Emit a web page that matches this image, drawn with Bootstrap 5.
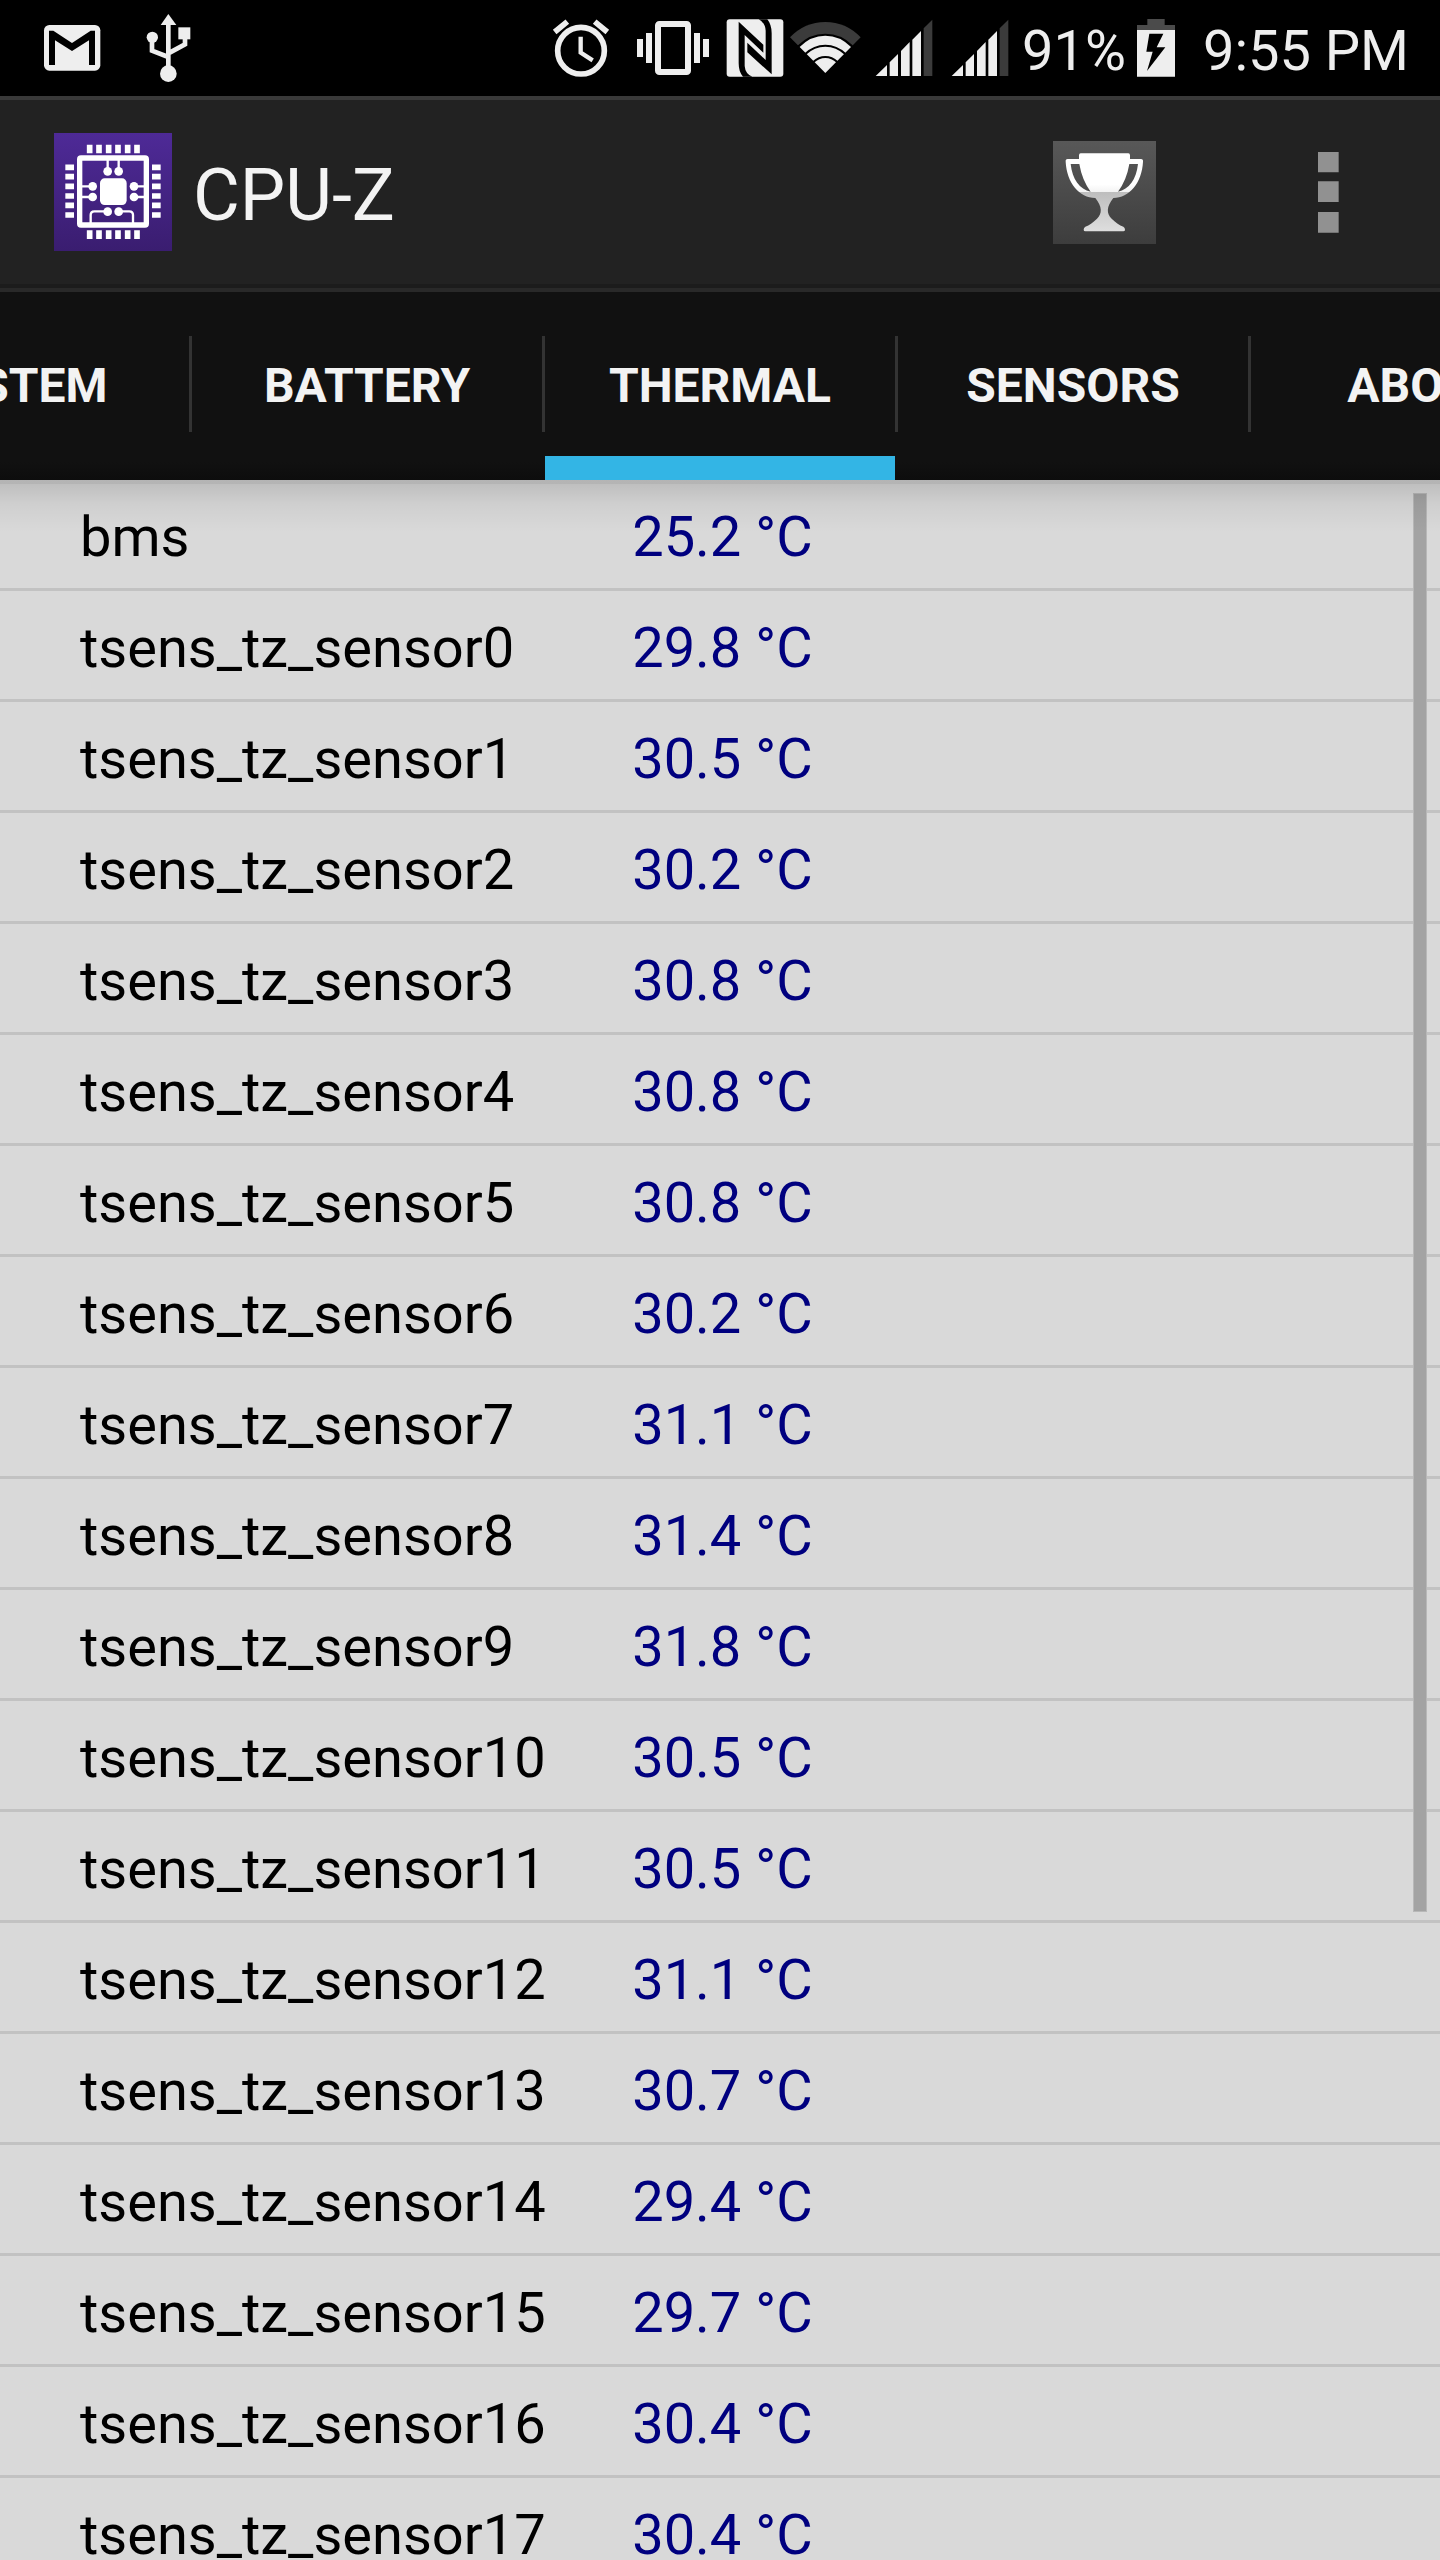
<!DOCTYPE html>
<html lang="en">
<head>
<meta charset="utf-8">
<meta name="viewport" content="width=device-width, initial-scale=1">
<title>CPU-Z</title>
<link href="https://cdn.jsdelivr.net/npm/bootstrap@5.3.0/dist/css/bootstrap.min.css" rel="stylesheet">
<style>
  body { font-family: Roboto, "Noto Sans", sans-serif; background: #d9d9d9; }
  svg { display: block; flex: none; }
  .status-bar { height: 96px; background: #000; color: #eee; font-size: 56px; line-height: 90px; padding-right: 31px; }
  .status-text { padding-top: 6px; }
  .action-bar { height: 196px; padding: 0 0 4px 54px; color: #f3f3f3; background: linear-gradient(#222 0 184px, #1c1c1c 184px); border-top: 4px solid #393939; border-bottom: 4px solid #292929; }
  .app-title { font-size: 72px; line-height: 84px; font-weight: 400; margin-left: 21px; padding-top: 8px; }
  .bar-btn { padding: 0; border: 0; border-radius: 0; background: none; }
  .trophy-btn { margin-right: 138px; }
  .menu-btn { padding: 0 101px 0 24px; }
  .tab-strip { height: 188px; background: linear-gradient(#111 170px, #0d0d0d); }
  .tab-item { flex: none; }
  .tab-link { width: 350px; color: #f3f3f3; font-size: 48px; font-weight: 700; }
  .tab-link.active { box-shadow: inset 0 -24px #33b5e5; }
  .tab-item + .tab-item::before { content: ""; width: 3px; height: 96px; margin-top: 44px; background: #333; }
  .list-area { min-height: 0; }
  .list-shade { height: 52px; background: linear-gradient(#0000002b 0 4px, #0000001f 4px, #0000000c 24px, #0000); pointer-events: none; }
  .list-thumb { top: 13px; right: 13px; width: 14px; height: 68.2%; background: #a3a3a3; border: 1px solid #b8b8b8; }
  .sensor-table { font-size: 56px; line-height: 66px; color: #000; table-layout: fixed; }
  .sensor-table th, .sensor-table td { padding: 24px 0 18px; font-weight: 400; border-bottom: 3px solid #c2c2c2; }
  .sensor-table th { width: 43.9%; padding-left: 80px; }
  .sensor-table td { color: #00007f; }
</style>
</head>
<body>
<div class="d-flex flex-column vh-100 overflow-hidden">
  <div class="status-bar d-flex flex-shrink-0">
    <svg width="144" height="96" viewBox="0 0 432 288" role="img" aria-label="Gmail"><rect x="132" y="75" width="169" height="137" rx="16" fill="#eee"/><path d="M147 92H160L216 129 272 92H285V195H267V121L216 153 165 121V195H147Z" fill="#000"/></svg>
    <svg width="56" height="96" viewBox="432 0 168 288" role="img" aria-label="USB"><g fill="#eee"><path d="M505 42L529 75H482Z"/><circle cx="457" cy="112" r="17"/><rect x="535" y="82" width="36" height="36"/><circle cx="505" cy="221" r="25"/></g><path d="M505 70V200M456 120V152L505 171M555 115V133L505 160" fill="none" stroke="#eee" stroke-width="14"/></svg>
    <svg class="ms-auto" width="82" height="96" viewBox="84 0 246 288" role="img" aria-label="Alarm"><g fill="none" stroke="#eee"><circle cx="183" cy="152" r="70" stroke-width="17"/><path d="M182 110V158L218 181" stroke-width="13"/><path d="M104 96L142 65M224 65L262 96" stroke-width="17"/></g></svg>
    <svg width="88" height="96" viewBox="330 0 264 288" role="img" aria-label="Vibrate"><rect x="414" y="72" width="90" height="144" rx="4" fill="none" stroke="#eee" stroke-width="18"/><path d="M351 117h18v54h-18zM378 99h18v90h-18zM522 99h18v90h-18zM549 117h18v54h-18z" fill="#eee"/></svg>
    <svg width="70" height="96" viewBox="594 0 210 288" role="img" aria-label="NFC"><rect x="620" y="58" width="170" height="172" rx="9" fill="#eee"/><path d="M656 65L730 134V158L674 105V198Q676 222 697 230H669Q656 216 656 190ZM755 223L682 157V128L737 180V92Q736 68 716 58H742Q755 74 755 100Z" fill="#000"/></svg>
    <svg width="82" height="96" viewBox="804 0 246 288" role="img" aria-label="Wi-Fi"><path d="M916 219L810 112Q854 66 916 66T1022 112Z" fill="#3b3b3b"/><path d="M916 219L834 136Q868 101 916 101T998 136V219H834V136Z" fill="#000"/><path d="M916 219L839 141Q872 107 916 107T993 141Z" fill="#eee"/><g fill="none" stroke="#000" stroke-width="6"><path d="M856 162Q882 137 916 137T976 162"/><path d="M880 186Q896 171 916 171T952 186"/></g></svg>
    <svg width="76" height="96" viewBox="1050 0 228 288" role="img" aria-label="Signal, first SIM"><path d="M1067 228L1101 195V228ZM1109 228V187L1134 162V228ZM1143 228V153L1169 126V228ZM1177 228V119L1203 93V228Z" fill="#eee"/><path d="M1211 228V85L1237 59V228Z" fill="#3b3b3b"/></svg>
    <svg width="76" height="96" viewBox="1050 0 228 288" role="img" aria-label="Signal, second SIM"><path d="M1067 228L1101 195V228ZM1109 228V187L1134 162V228ZM1143 228V153L1169 126V228ZM1177 228V119L1203 93V228Z" fill="#eee"/><path d="M1211 228V85L1237 59V228Z" fill="#3b3b3b"/></svg>
    <span class="status-text">91%</span>
    <svg width="77" height="96" viewBox="498 0 231 288" role="img" aria-label="Charging"><path d="M531 90V75H562V57H614V75H645V90Z" fill="#4b4b4b"/><path d="M531 90H645V230H531Z" fill="#eee"/><path d="M568 101H610L590 142H616L561 213 578 155H559Z" fill="#000"/></svg>
    <span class="status-text">9:55 PM</span>
  </div>

  <header class="action-bar d-flex align-items-center flex-shrink-0">
    <svg width="118" height="118" viewBox="162 399 354 354" role="img" aria-label="CPU-Z logo">
      <defs><linearGradient id="violet" x2="0" y2="1"><stop stop-color="#4e2a97"/><stop offset="1" stop-color="#3a1d70"/></linearGradient></defs>
      <rect x="162" y="399" width="354" height="354" fill="url(#violet)"/>
      <g fill="none" stroke="#fff"><rect x="239" y="474" width="200" height="201" rx="4" stroke-width="16"/>
      <path d="M323 480V514M356 480V514M245 559H278M245 591H278M402 559H433M402 591H433M272 670V645Q272 634 283 634H323M356 634H388Q399 634 399 645V670" stroke-width="7"/>
      <path d="M269 434v26M297 434v26M326 434v26M354 434v26M383 434v26M411 434v26M269 691v26M297 691v26M326 691v26M354 691v26M383 691v26M411 691v26M196 502h26M196 530h26M196 559h26M196 588h26M196 616h26M196 645h26M456 502h26M456 530h26M456 559h26M456 588h26M456 616h26M456 645h26" stroke-width="17"/></g>
      <g fill="#fff"><rect x="300" y="535" width="80" height="80" rx="14"/><circle cx="323" cy="514" r="13"/><circle cx="356" cy="514" r="13"/><circle cx="278" cy="559" r="13"/><circle cx="278" cy="591" r="13"/><circle cx="402" cy="559" r="13"/><circle cx="402" cy="591" r="13"/><circle cx="323" cy="635" r="13"/><circle cx="356" cy="635" r="13"/></g>
    </svg>
    <h1 class="app-title mb-0">CPU-Z</h1>
    <button type="button" class="bar-btn trophy-btn ms-auto" aria-label="Ranking">
      <svg width="103" height="103" viewBox="159 150 309 309">
        <defs><linearGradient id="plate" x2="0" y2="1"><stop stop-color="#585858"/><stop offset="1" stop-color="#3d3d3d"/></linearGradient>
        <linearGradient id="cup" gradientUnits="userSpaceOnUse" x1="0" y1="187" x2="0" y2="421"><stop stop-color="#fff"/><stop offset=".4" stop-color="#fff"/><stop offset=".5" stop-color="#f2f2f2"/><stop offset=".5" stop-color="#bebebe"/><stop offset="1" stop-color="#dedede"/></linearGradient></defs>
        <rect x="159" y="150" width="309" height="309" fill="url(#plate)"/>
        <path fill="url(#cup)" fill-rule="evenodd" d="M242 187H385Q390 187 390 193V204H423Q430 204 429 212C426 275 388 320 340 321C319 347 319 368 335 383C348 396 358 402 370 407Q375 410 375 416 375 421 370 421H256Q251 421 251 416 251 410 256 407C268 402 278 396 291 383C307 368 307 347 286 321C238 320 200 275 197 212Q196 204 203 204H237V193Q237 187 242 187ZM212 219C217 265 239 295 272 302Q246 267 238 219ZM414 219H388Q380 267 354 302C387 295 409 265 414 219Z"/>
      </svg>
    </button>
    <button type="button" class="bar-btn menu-btn" aria-label="More options">
      <svg width="21" height="81" viewBox="955 185 63 243" fill="#919191"><path d="M955 185h62v61h-62zM955 273h62v62h-62zM955 365h62v62h-62z"/></svg>
    </button>
  </header>

  <nav class="tab-strip d-flex justify-content-center flex-shrink-0 overflow-hidden">
    <div class="tab-item d-flex"><a href="#system" class="tab-link d-flex align-items-center justify-content-center text-decoration-none">SYSTEM</a></div>
    <div class="tab-item d-flex"><a href="#battery" class="tab-link d-flex align-items-center justify-content-center text-decoration-none">BATTERY</a></div>
    <div class="tab-item d-flex"><a href="#thermal" class="tab-link active d-flex align-items-center justify-content-center text-decoration-none" aria-current="page">THERMAL</a></div>
    <div class="tab-item d-flex"><a href="#sensors" class="tab-link d-flex align-items-center justify-content-center text-decoration-none">SENSORS</a></div>
    <div class="tab-item d-flex"><a href="#about" class="tab-link d-flex align-items-center justify-content-center text-decoration-none">ABOUT</a></div>
  </nav>

  <main id="thermal" class="list-area position-relative flex-fill overflow-hidden">
    <table class="sensor-table w-100">
      <tbody>
        <tr><th scope="row">bms</th><td>25.2 °C</td></tr>
        <tr><th scope="row">tsens_tz_sensor0</th><td>29.8 °C</td></tr>
        <tr><th scope="row">tsens_tz_sensor1</th><td>30.5 °C</td></tr>
        <tr><th scope="row">tsens_tz_sensor2</th><td>30.2 °C</td></tr>
        <tr><th scope="row">tsens_tz_sensor3</th><td>30.8 °C</td></tr>
        <tr><th scope="row">tsens_tz_sensor4</th><td>30.8 °C</td></tr>
        <tr><th scope="row">tsens_tz_sensor5</th><td>30.8 °C</td></tr>
        <tr><th scope="row">tsens_tz_sensor6</th><td>30.2 °C</td></tr>
        <tr><th scope="row">tsens_tz_sensor7</th><td>31.1 °C</td></tr>
        <tr><th scope="row">tsens_tz_sensor8</th><td>31.4 °C</td></tr>
        <tr><th scope="row">tsens_tz_sensor9</th><td>31.8 °C</td></tr>
        <tr><th scope="row">tsens_tz_sensor10</th><td>30.5 °C</td></tr>
        <tr><th scope="row">tsens_tz_sensor11</th><td>30.5 °C</td></tr>
        <tr><th scope="row">tsens_tz_sensor12</th><td>31.1 °C</td></tr>
        <tr><th scope="row">tsens_tz_sensor13</th><td>30.7 °C</td></tr>
        <tr><th scope="row">tsens_tz_sensor14</th><td>29.4 °C</td></tr>
        <tr><th scope="row">tsens_tz_sensor15</th><td>29.7 °C</td></tr>
        <tr><th scope="row">tsens_tz_sensor16</th><td>30.4 °C</td></tr>
        <tr><th scope="row">tsens_tz_sensor17</th><td>30.4 °C</td></tr>
      </tbody>
    </table>
    <div class="list-thumb position-absolute"></div>
    <div class="list-shade position-absolute top-0 start-0 w-100"></div>
  </main>
</div>
<script src="https://cdn.jsdelivr.net/npm/bootstrap@5.3.0/dist/js/bootstrap.bundle.min.js"></script>
</body>
</html>
